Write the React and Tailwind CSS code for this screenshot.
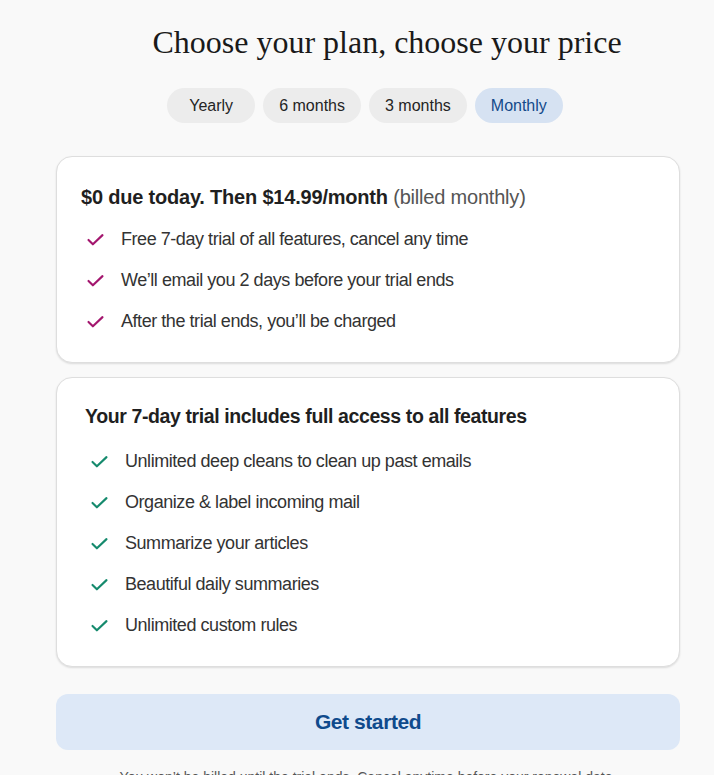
const plans = ['Yearly', '6 months', '3 months', 'Monthly'];

const trialPoints = [
  'Free 7-day trial of all features, cancel any time',
  'We’ll email you 2 days before your trial ends',
  'After the trial ends, you’ll be charged',
];

const features = [
  'Unlimited deep cleans to clean up past emails',
  'Organize & label incoming mail',
  'Summarize your articles',
  'Beautiful daily summaries',
  'Unlimited custom rules',
];

const Check = ({ className }) => (
  <svg viewBox="0 0 24 24" className={className} fill="none" stroke="currentColor" strokeWidth="2.4" strokeLinecap="round" strokeLinejoin="round">
    <path d="M4 12.5l5 5L20 7" />
  </svg>
);

export default function App() {
  const selected = 'Monthly';

  return (
    <div className="min-h-[775px] bg-[#f9f9f9] text-[#242424]" style={{ fontFamily: '"Liberation Sans", Arial, sans-serif' }}>
      <div className="pl-[56px] pr-[34px] pt-[22px]">
        <h1 className="text-center pl-[38px] text-[32px] leading-[40px] text-[#1a1a1a]" style={{ fontFamily: '"Liberation Serif", "Times New Roman", serif' }}>
          Choose your plan, choose your price
        </h1>

        <div className="mt-[26px] flex justify-center gap-2 pr-[6px]">
          {plans.map((p) => (
            <button
              key={p}
              className={
                p === selected
                  ? 'h-[35px] min-w-[88px] rounded-full px-4 text-[16px] bg-[#d6e2f2] text-[#134a8a]'
                  : 'h-[35px] min-w-[88px] rounded-full px-4 text-[16px] bg-[#ececec] text-[#242424]'
              }
            >
              {p}
            </button>
          ))}
        </div>

        <div className="mt-[33px] rounded-2xl border border-[#dedede] bg-white px-6 pt-[26px] pb-[27px] shadow-[0_1px_2px_rgba(0,0,0,0.12)]">
          <p className="text-[20px] leading-[28px] tracking-[-0.01em]">
            <span className="font-bold text-[#1f1f1f]">$0 due today. Then $14.99/month</span>{' '}
            <span className="text-[#555]">(billed monthly)</span>
          </p>
          <ul className="mt-[14px] flex flex-col gap-[13px] pl-[4px]">
            {trialPoints.map((t) => (
              <li key={t} className="flex items-center gap-[15px] text-[18px] leading-[28px] tracking-[-0.025em] text-[#333]">
                <Check className="h-[21px] w-[21px] shrink-0 text-[#a3166e]" />
                {t}
              </li>
            ))}
          </ul>
        </div>

        <div className="mt-[14px] rounded-2xl border border-[#dedede] bg-white px-7 pt-[24px] pb-[27px] shadow-[0_1px_2px_rgba(0,0,0,0.12)]">
          <p className="text-[19.5px] leading-[28px] tracking-[-0.02em] font-bold text-[#1f1f1f]">
            Your 7-day trial includes full access to all features
          </p>
          <ul className="mt-[17px] flex flex-col gap-[13px] pl-[4px]">
            {features.map((f) => (
              <li key={f} className="flex items-center gap-[15px] text-[18px] leading-[28px] tracking-[-0.025em] text-[#333]">
                <Check className="h-[21px] w-[21px] shrink-0 text-[#158a6d]" />
                {f}
              </li>
            ))}
          </ul>
        </div>

        <button className="mt-[27px] h-[56px] w-full rounded-xl bg-[#dde8f7] text-[21px] font-bold tracking-[-0.02em] text-[#0f4a8c]">
          Get started
        </button>

        <p className="mt-[17px] text-center text-[14px] text-[#555]">
          You won’t be billed until the trial ends. Cancel anytime before your renewal date.
        </p>
      </div>
    </div>
  );
}
